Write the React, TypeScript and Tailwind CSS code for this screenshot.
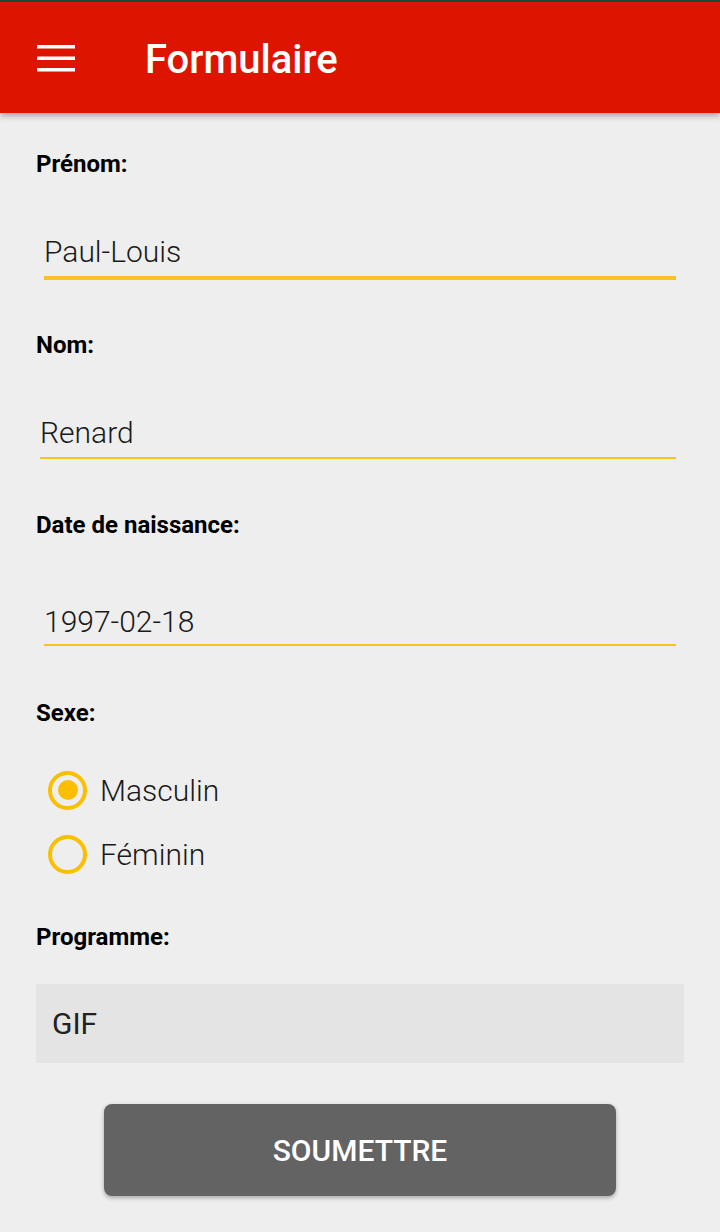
import React from 'react';

const FONT = { fontFamily: 'Roboto, "Liberation Sans", sans-serif' };

function Label({ text, className = '' }: { text: string; className?: string }) {
  return <div className={`text-[24px] leading-[28px] font-bold text-black ${className}`}>{text}</div>;
}

function Field({ value, className = '', focused = false }: { value: string; className?: string; focused?: boolean }) {
  return (
    <div
      className={`text-[30px] leading-[36px] font-light text-[#1a1a1a] border-[#f7c325] ${
        focused ? 'border-b-[4px]' : 'border-b-2'
      } ${className}`}
    >
      {value}
    </div>
  );
}

function Radio({ label, checked }: { label: string; checked?: boolean }) {
  return (
    <div className="flex items-center h-16">
      <div className="w-[39px] h-[39px] ml-3 rounded-full border-[4px] border-[#fbbf00] flex items-center justify-center">
        {checked && <div className="w-5 h-5 rounded-full bg-[#fbbf00]" />}
      </div>
      <span className="ml-[13px] text-[30px] font-light text-[#1a1a1a]">{label}</span>
    </div>
  );
}

export default function App() {
  return (
    <div className="w-[720px] h-[1232px] bg-[#eeeeee] overflow-hidden" style={FONT}>
      {/* Toolbar */}
      <div className="h-[2px] bg-[#1d4a3c]" />
      <header className="relative z-10 h-[111px] bg-[#dd1500] flex items-center shadow-[0_3px_6px_rgba(0,0,0,0.3)]">
        <svg width="38" height="27" viewBox="0 0 38 27" className="ml-[37px] mt-[2px]">
          <rect x="0" y="0" width="38" height="3.5" fill="#fff" />
          <rect x="0" y="11.5" width="38" height="3.5" fill="#fff" />
          <rect x="0" y="23" width="38" height="3.5" fill="#fff" />
        </svg>
        <h1 className="ml-[70px] text-[40px] font-medium text-white leading-none mt-[4px]">Formulaire</h1>
      </header>

      {/* Form */}
      <div className="flex flex-col px-9">
        <Label text="Prénom:" className="mt-[37px]" />
        <Field value="Paul-Louis" focused className="mt-[56px] ml-2 mr-2 pb-[6px]" />

        <Label text="Nom:" className="mt-[51px]" />
        <Field value="Renard" className="mt-[56px] ml-1 mr-2 pb-[6px]" />

        <Label text="Date de naissance:" className="mt-[52px]" />
        <Field value="1997-02-18" className="mt-[65px] ml-2 mr-2 pb-[4px]" />

        <Label text="Sexe:" className="mt-[53px]" />
        <div className="mt-[31px] flex flex-col">
          <Radio label="Masculin" checked />
          <Radio label="Féminin" />
        </div>

        <Label text="Programme:" className="mt-[37px]" />
        <div className="mt-[33px] h-[79px] bg-[#e4e4e4] flex items-center pl-[16px]">
          <span className="text-[30px] text-[#222]">GIF</span>
        </div>

        <div className="mt-[41px] flex justify-center">
          <button className="w-[512px] h-[92px] rounded-lg bg-[#636363] text-white text-[30px] font-medium shadow-[0_2px_4px_rgba(0,0,0,0.3)]">
            SOUMETTRE
          </button>
        </div>
      </div>
    </div>
  );
}
